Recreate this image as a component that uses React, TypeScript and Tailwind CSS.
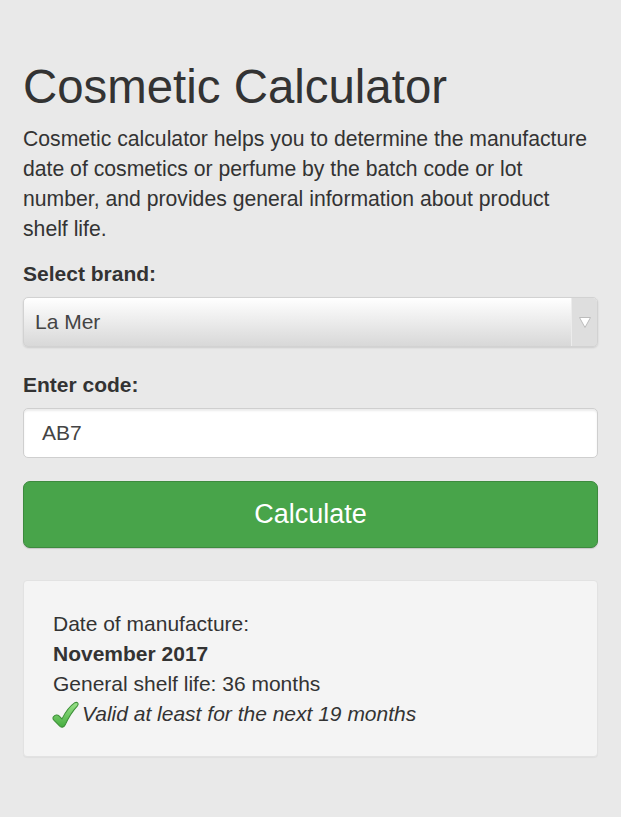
import React from "react";

export default function App() {
  return (
    <div
      className="min-h-[817px] w-full bg-[#e9e9e9] text-[#333333] px-[23px] pt-[58px]"
      style={{ fontFamily: '"Liberation Sans", Arial, sans-serif' }}
    >
      <h1 className="text-[47.4px] leading-[58px] font-normal text-[#333333]">
        Cosmetic Calculator
      </h1>
      <p className="mt-[8px] text-[21.2px] leading-[30px] text-[#333333]">
        Cosmetic calculator helps you to determine the manufacture date of cosmetics or perfume by the batch code or lot number, and provides general information about product shelf life.
      </p>

      <div className="mt-[15px] text-[21px] leading-[30px] font-bold text-[#333333]">Select brand:</div>
      <div className="mt-[8px] flex h-[50px] rounded-[5px] border border-[#d2d2d2] bg-gradient-to-b from-[#ffffff] to-[#d8d8d8] shadow-[0_1px_2px_rgba(0,0,0,0.12)] overflow-hidden">
        <div className="flex-1 flex items-center pl-[11px] text-[21px] text-[#444444]">La Mer</div>
        <div className="w-[26px] shrink-0 flex items-center justify-center border-l border-[#ececec] bg-[#dedede]">
          <svg width="14" height="13" viewBox="0 0 14 13" className="shrink-0">
            <path d="M1.5 1.5 L12.5 1.5 L7 11.5 Z" fill="#ffffff" stroke="#bcbcbc" strokeWidth="1" strokeLinejoin="round" />
          </svg>
        </div>
      </div>

      <div className="mt-[23px] text-[21px] leading-[30px] font-bold text-[#333333]">Enter code:</div>
      <div className="mt-[8px] flex h-[50px] items-center rounded-[5px] border border-[#cfcfcf] bg-white pl-[18px] text-[21px] text-[#444444] shadow-[inset_0_2px_2px_rgba(0,0,0,0.08)]">
        AB7
      </div>

      <button className="mt-[23px] flex h-[67px] w-full items-center justify-center rounded-[7px] border border-[#3d8a3e] bg-[#48a44a] text-[27px] text-white shadow-[0_1px_1px_rgba(0,0,0,0.15)]">
        Calculate
      </button>

      <div className="mt-[32px] h-[177px] rounded-[4px] border border-[#e2e2e2] bg-[#f4f4f4] pl-[29px] pt-[28px] text-[21px] leading-[30px] text-[#333333] shadow-[0_1px_1px_rgba(0,0,0,0.04)]">
        <div>Date of manufacture:</div>
        <div className="font-bold">November 2017</div>
        <div>General shelf life: 36 months</div>
        <div className="flex items-center">
          <svg width="27" height="27" viewBox="0 0 26 26" className="-ml-[1px] mr-[3px] shrink-0">
            <defs>
              <linearGradient id="ck" x1="0" y1="0" x2="0" y2="1">
                <stop offset="0" stopColor="#9be38a" />
                <stop offset="1" stopColor="#45ad3f" />
              </linearGradient>
            </defs>
            <path
              d="M1.2 15.5 C2.8 13.2 5.2 12.8 7 14.6 L9.6 17.2 C13 10.5 17 5 22 1.6 C24.6 0.6 26 2.6 24.5 4.6 C19.5 10 15.5 16.5 12.6 23.2 C11.4 25.6 8.6 25.8 7 23.8 L1.8 18.4 C0.9 17.5 0.8 16.3 1.2 15.5 Z"
              fill="url(#ck)"
              stroke="#3c8f37"
              strokeWidth="1"
            />
          </svg>
          <span className="italic">Valid at least for the next 19 months</span>
        </div>
      </div>
    </div>
  );
}
